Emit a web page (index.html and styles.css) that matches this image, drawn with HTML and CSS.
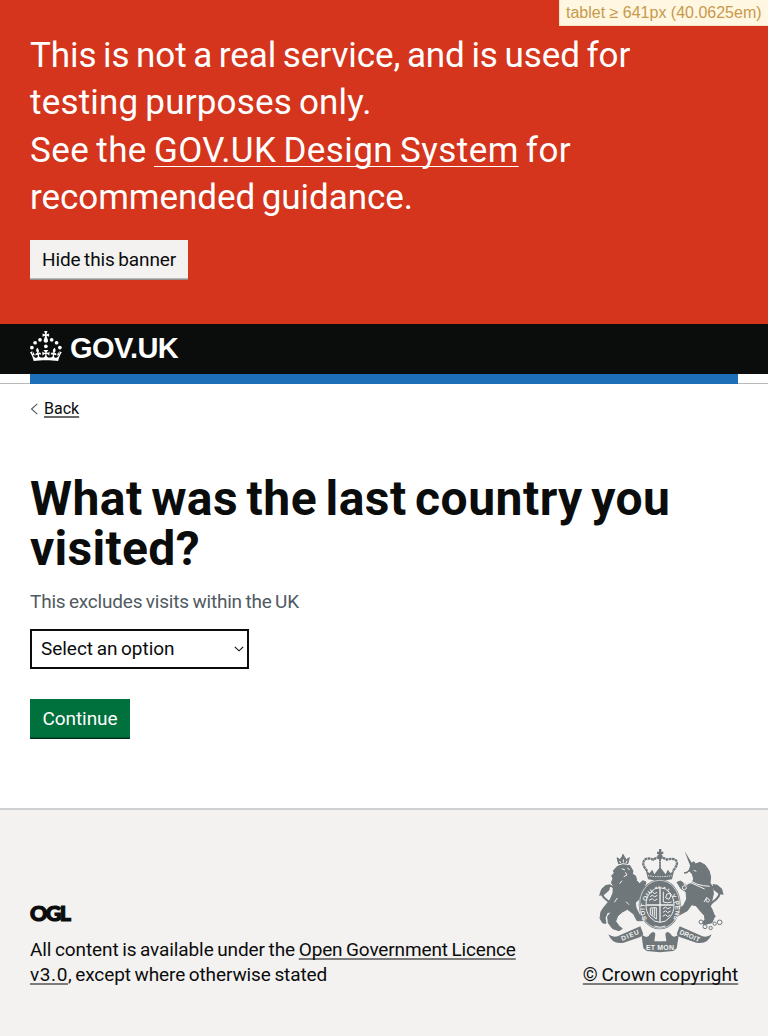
FILE: index.html
```
<!DOCTYPE html>
<html lang="en">
<head>
<meta charset="utf-8">
<title>What was the last country you visited?</title>
<link rel="stylesheet" href="styles.css">
</head>
<body>
<div class="breakpoint">tablet ≥ 641px (40.0625em)</div>
<aside class="banner">
  <p class="banner-text">
    <span class="b1">This is not a real service, and is used for</span><br>
    <span class="b2">testing purposes only.</span><br>
    <span class="b3">See the <a href="#">GOV.UK Design System</a> for</span><br>
    <span class="b4">recommended guidance.</span>
  </p>
  <button class="button button-secondary">Hide this banner</button>
</aside>
<header class="header">
  <a class="logo" href="#">
    <svg class="crown" viewBox="0 0 64 60" fill="currentColor" aria-hidden="true">
      <circle cx="20" cy="17.6" r="3.7"/><circle cx="10.2" cy="23.5" r="3.7"/><circle cx="3.7" cy="33.2" r="3.7"/><circle cx="31.7" cy="30.6" r="3.7"/><circle cx="43.3" cy="17.6" r="3.7"/><circle cx="53.2" cy="23.5" r="3.7"/><circle cx="59.7" cy="33.2" r="3.7"/>
      <path d="M33.1,9.8c.2-.1.3-.3.5-.5l4.6,2.4v-6.8l-4.6,1.5c-.1-.2-.3-.3-.5-.5l1.9-5.9h-6.7l1.9,5.9c-.2.1-.3.3-.5.5l-4.6-1.5v6.8l4.6-2.4c.1.2.3.3.5.5l-2.6,8c-.9,2.8,1.2,5.7,4.1,5.7h0c3,0,5.1-2.9,4.1-5.7l-2.6-8ZM37,37.9s-3.4,3.8-4.1,6.1c2.2,0,4.2-.5,6.4-2.8l-.7,8.5c-2-2.8-4.4-4.1-5.7-3.8.1,3.1.5,6.7,5.8,7.2,3.7.3,6.7-1.5,7-3.8.4-2.6-2-4.3-3.7-1.6-1.4-4.5,2.4-6.1,4.9-3.2-1.9-4.5-1.8-7.7,2.4-10.9,3,4,2.6,7.3-1.2,11.1,2.4-1.3,6.2,0,4,4.6-1.2-2.8-3.7-2.2-4.2.2-.3,1.7.7,3.7,3,4.2,1.9.3,4.7-.9,7-5.9-1.3,0-2.4.7-3.9,1.7l2.4-8c.6,2.3,1.4,3.7,2.2,4.5.6-1.6.5-2.8,0-5.3l5,1.8c-2.6,3.6-5.2,8.7-7.3,17.5-7.4-1.1-15.7-1.7-24.5-1.7h0c-8.8,0-17.1.6-24.5,1.7-2.1-8.9-4.7-13.9-7.3-17.5l5-1.8c-.5,2.5-.6,3.7,0,5.3.8-.8,1.6-2.3,2.2-4.5l2.4,8c-1.5-1-2.6-1.7-3.9-1.7,2.3,5,5.2,6.2,7,5.9,2.3-.4,3.3-2.4,3-4.2-.5-2.4-3-3.1-4.2-.2-2.2-4.6,1.6-6,4-4.6-3.7-3.7-4.2-7.1-1.2-11.1,4.2,3.2,4.3,6.4,2.4,10.9,2.5-2.8,6.3-1.3,4.9,3.2-1.8-2.7-4.1-1-3.7,1.6.3,2.3,3.3,4.1,7,3.8,5.4-.5,5.7-4.2,5.8-7.2-1.3-.2-3.7,1-5.7,3.8l-.7-8.5c2.2,2.3,4.2,2.7,6.4,2.8-.7-2.3-4.1-6.1-4.1-6.1h10.6,0Z"/>
    </svg>
    <span class="wordmark">GOV.UK</span>
  </a>
</header>
<div class="accent"><div class="accent-bar"></div></div>
<main class="main">
  <a class="back" href="#">
    <svg class="chevron" viewBox="0 0 8 12" aria-hidden="true"><path d="M7.3.8 1.5 6l5.8 5.2" fill="none" stroke="#505a5f" stroke-width="1.1"/></svg>
    <span>Back</span>
  </a>
  <h1 class="title"><span class="t1">What was the last country you</span><br><span class="t2">visited?</span></h1>
  <p class="hint">This excludes visits within the UK</p>
  <div class="select">
    <span class="select-value">Select an option</span>
    <svg class="caret" viewBox="0 0 10 6" aria-hidden="true"><path d="M.8.8 5 4.8 9.2.8" fill="none" stroke="#0b0c0c" stroke-width="1.1"/></svg>
  </div>
  <button class="button button-primary">Continue</button>
</main>
<footer class="footer">
  <div class="licence">
    <div class="ogl">OGL</div>
    <p class="licence-text"><span class="f1">All content is available under the</span> <a class="f2" href="#">Open Government Licence</a><br><a class="f3" href="#">v3.0</a><span class="f4">, except where otherwise stated</span></p>
  </div>
  <div class="copyright">
    <svg class="crest" viewBox="0 0 420 360" aria-hidden="true">
      <g fill="#6f777b">
        <!-- crown -->
        <circle cx="207" cy="50" r="8"/><path d="M204 27h7v8h6v7h-6v8h-7v-8h-6v-7h6z"/>
        <path d="M164 89l7 29q36 8 72 0l7-29-11 11-9-11-6 14-10-13-7-9-7 9-10 13-6-14-9 11z"/>
        <!-- lion -->
        <g stroke="#6f777b" stroke-width="3" stroke-linejoin="round">
          <path d="M78 53l9 6 6-9 3-7 4 7 6 9 9-6-5 19q-14-4-27 0z"/>
          <path d="M80 78q17-10 36-2l10 17-2 9 10 6 3 14 9 9 9-9 10 4-5 15-8 11-10 28-9 8 2 15 9 19 16 12-4 8h-18l-10-20-19-14-15 8-14 12-6 16 10 14 10 8-10 6-19-6-13-17-2-19 11-15-12 3-7 16 3 16-10-1-8-14 3-20 10-15 17-20 9-21 1-22-6-9 5-12-4-9 8-8-3-7z"/>
        </g>
        <!-- unicorn -->
        <path d="M281 34l25 40-8 5z"/>
        <g stroke="#6f777b" stroke-width="3" stroke-linejoin="round">
          <path d="M288 99l8-12 4-16 9-6 4 7 14-5 15 8 12 17 5 19-2 17 8 14 2 20-5 22-7 11 8 13 8 21-8 19-23 6-7-4 9-12-2-12-12-13-13-16-13-3-13 18-20 11-17 8-9-9 16-12 19-14 9-19-2-22-15-9-12-19 10-4 17 11 17-3 6-14-4-15-9-9-16 6z"/>
        </g>
        <!-- scroll -->
        <path d="M52 283q18 13 36 2l60-26 9 23-9 9-50 17q-34 7-46-25z"/>
        <path d="M362 283q-18 13-36 2l-60-26-9 23 9 9 50 17q34 7 46-25z"/>
        <path d="M151 282q18 18 26 0 12-12 16 0l-3 22h36l-3-22q5-12 16 0 8 17 25 0l-7 43-10 8-40 4-40-4-10-8z"/>
      </g>
      <g fill="none" stroke="#6f777b">
        <path d="M169 93c-27-28-4-45 18-34 12-9 28-9 40 0 25-9 45 6 18 34" stroke-width="7" stroke-dasharray="8 1.5"/>
        <path d="M207 56v34" stroke-width="6" stroke-dasharray="7 1.5"/>
        <path d="M51 229q31-13 12-39-34-18-31-36 5-13 22-17 17 1 18 15M373 230q-33-16-10-42 29-20 22-38-7-10-22-8-9 7-8 17" stroke-width="6"/>
      </g>
      <path d="M207 280v24M196 296c0-11 11-7 11 1 0-8 11-12 11-1" stroke="#f3f2f1" fill="none" stroke-width="3"/>
      <g fill="#f3f2f1" stroke="#6f777b" stroke-width="3">
        <circle cx="330" cy="246" r="6"/><circle cx="342" cy="260" r="6"/><circle cx="359" cy="264" r="5"/><circle cx="371" cy="251" r="5"/><circle cx="386" cy="247" r="7"/>
      </g>
      <path d="M24 167l7-19 13-13 15-2-4 18-16 14zM398 164l-5-18-14-12-14-2 2 17 17 14z" fill="#6f777b"/>
      <!-- facial details and collars -->
      <g fill="none" stroke="#f3f2f1" stroke-width="3">
        <path d="M78 76q18-9 36-2M86 63l3 6M97 58v9M108 62l-3 7M92 86l10 4M109 84l7 5M103 97l5 8-10 5M93 122l-7 9M308 91l8 3M295 119q20 18 61 20M301 129l40 18M79 174l-9 13M105 185l9 9M348 171l-9 15"/>
        <circle cx="285" cy="129" r="6"/><circle cx="280" cy="143" r="6"/><circle cx="350" cy="181" r="5"/>
        <path d="M171 107q36 6 72 0" stroke-dasharray="4 3"/>
      </g>
      <!-- garter and shield -->
      <ellipse cx="206" cy="193" rx="63" ry="75" fill="#6f777b"/>
      <ellipse cx="206" cy="193" rx="60" ry="72" fill="none" stroke="#f3f2f1" stroke-width="2"/>
      <path id="garter" d="M168 238A46 56 0 1 1 246 238" fill="none"/>
      <text class="crest-motto" font-size="19"><textPath href="#garter" textLength="235">SOIT QUI MAL Y PENSE</textPath></text>
      <ellipse cx="207" cy="195" rx="42" ry="52" fill="#6f777b" stroke="#f3f2f1" stroke-width="3"/>
      <path d="M207 144v102M166 195h82" stroke="#f3f2f1" stroke-width="4"/>
      <g fill="none" stroke="#f3f2f1" stroke-width="3">
        <path d="M179 160l6-5 5 6 8-4M177 170l8-5 5 6 9-5M174 181l10-5 6 6 9-5M217 155v31q12 5 25 0M224 174l3-11 9-4 3 9-5 10zM178 204v19l18 14v-34zM184 206v20M190 204v25M216 206l8-5 6 6 9-5M216 217l8-5 6 6 9-5M215 229l9-5 6 6 7-5M190 258q17 8 33 0"/>
      </g>
      <text class="crest-motto" font-size="20" transform="translate(94 303) rotate(-23)" textLength="56">DIEU</text>
      <text class="crest-motto" font-size="20" transform="translate(264 281) rotate(23)" textLength="64">DROIT</text>
      <text class="crest-motto" font-size="21" x="165" y="329" textLength="84">ET MON</text>
    </svg>
    <a class="copyright-link" href="#">© Crown copyright</a>
  </div>
</footer>
</body>
</html>
```
FILE: styles.css
```
* { box-sizing: border-box; }
body {
  margin: 0;
  min-height: 1036px;
  display: flex;
  flex-direction: column;
  background: #fff;
  color: #0b0c0c;
  font: 19px/25px Roboto, Arial, sans-serif;
  word-spacing: -1px;
}
p, h1 { margin: 0; white-space: nowrap; }
a { color: inherit; text-decoration: underline; text-decoration-thickness: 1px; text-underline-offset: 4px; text-decoration-skip-ink: none; }

.breakpoint {
  position: absolute;
  top: 0;
  right: 0;
  width: 209px;
  height: 26px;
  padding-left: 6px;
  border-left: 1px solid #f3e6c6;
  border-bottom: 1px solid #f3e6c6;
  background: #fff7e2;
  color: #c7994b;
  font: 16px/25px "Liberation Sans", Arial, sans-serif;
  word-spacing: 0;
}

.banner { height: 324px; padding: 32px 30px 0; background: #d4351c; color: #fff; }
.banner-text { margin-bottom: 18px; font-size: 35px; line-height: 47.4px; word-spacing: -2px; }
.b1 { letter-spacing: -.07px; }
.b2 { letter-spacing: .2px; }
.b3 { letter-spacing: .42px; }
.b4 { letter-spacing: -.05px; }

.button {
  display: block;
  height: 39px;
  padding: 0 12px;
  border: 0;
  font: inherit;
  line-height: 39px;
  word-spacing: -1px;
  white-space: nowrap;
}
.button-secondary { width: 158px; background: #f3f2f1; color: #0b0c0c; letter-spacing: -.12px; box-shadow: inset 0 -1px #b9b8b7, 0 1px #929191; }
.button-primary { width: 100px; margin-top: 30px; background: #00703c; color: #fff; letter-spacing: -.06px; box-shadow: inset 0 -1px #00562e, 0 1px #002d18; }

.header { height: 50px; padding: 7px 30px 0; background: #0b0c0c; color: #fff; }
.logo { display: flex; gap: 8px; text-decoration: none; }
.crown { width: 32px; height: 30px; }
.wordmark { font: bold 29px/35px "Liberation Sans", Arial, sans-serif; letter-spacing: -.6px; }

.accent { height: 10px; padding: 0 30px; border-bottom: 1px solid #b8bbbd; }
.accent-bar { height: 10px; background: #1d70b8; }

.main { padding: 15px 30px 0; height: 424px; }
.back { display: flex; align-items: center; gap: 6px; width: 60px; height: 20px; font-size: 16px; line-height: 20px; text-decoration: none; }
.back span { text-decoration: underline #6a6a6a; text-decoration-thickness: 2px; text-underline-offset: 2px; }
.chevron { width: 8px; height: 12px; }
.title { margin-top: 55px; font-size: 48px; line-height: 50px; font-weight: 700; word-spacing: -4px; }
.t1 { letter-spacing: .48px; }
.t2 { letter-spacing: .3px; }
.hint { margin-top: 15px; color: #505a5f; letter-spacing: -.2px; }
.select {
  display: flex;
  align-items: center;
  justify-content: space-between;
  width: 219px;
  height: 40px;
  margin-top: 15px;
  padding: 0 3px 0 9px;
  border: 2px solid #0b0c0c;
  letter-spacing: -.04px;
}
.select-value { padding-bottom: 2px; }
.caret { width: 10px; height: 6px; }

.footer {
  display: flex;
  justify-content: space-between;
  height: 228px;
  padding: 30px 30px 0;
  border-top: 2px solid #cfd0d1;
  background: #f3f2f1;
}
.footer a { text-decoration: underline #7b7c7b; text-decoration-thickness: 2px; text-underline-offset: 2px; }
.licence { padding-top: 62px; }
.ogl { height: 35px; font: 900 21.5px/22px Lato, sans-serif; -webkit-text-stroke: 1.2px #0b0c0c; letter-spacing: -1.6px; }
.f1 { letter-spacing: -.1px; }
.f2 { letter-spacing: -.14px; }
.f3 { letter-spacing: .6px; }
.f4 { letter-spacing: -.1px; }
.copyright { display: flex; flex-direction: column; align-items: center; width: 155px; }
.crest { width: 140px; height: 120px; }
.crest-motto { fill: #f3f2f1; font-family: "Liberation Sans", sans-serif; font-weight: 700; word-spacing: 0; }
.copyright-link { margin-top: 2px; white-space: nowrap; }
```
